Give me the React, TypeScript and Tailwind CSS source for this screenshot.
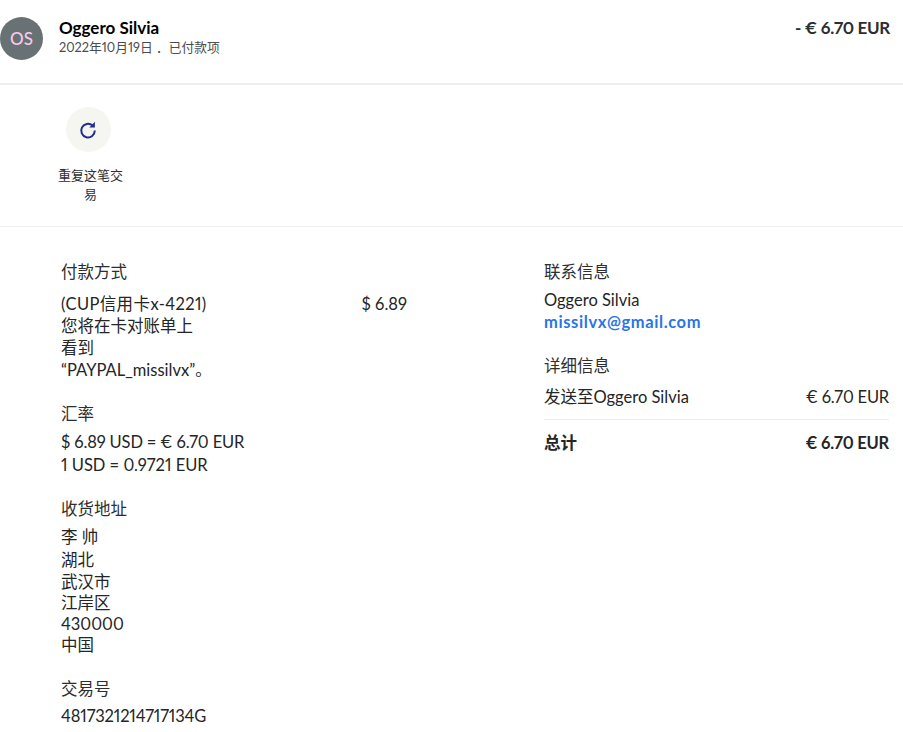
const font = 'Lato, "Noto Sans CJK SC", sans-serif';

function Label({ children }: { children: React.ReactNode }) {
  return <h3 className="text-[16.5px] leading-[22px] text-[#2c2e2f]">{children}</h3>;
}

export default function App() {
  return (
    <div className="w-[903px] h-[732px] overflow-hidden bg-white text-[#232526] [font-variant-numeric:proportional-nums]" style={{ fontFamily: font }}>
      {/* Header */}
      <header className="h-[85px] border-b-2 border-[#eeeeee] flex items-start pt-[17px] pr-[13px]">
        <div className="w-[43px] h-[43px] rounded-full bg-[#687173] flex items-center justify-center text-[17px] font-medium text-[#f8c8ea]">
          OS
        </div>
        <div className="ml-4">
          <div className="text-[17px] leading-[22px] font-bold text-black">Oggero Silvia</div>
          <div className="text-[12.75px] leading-[17px] text-[#4a4d4f]">2022年10月19日 ．已付款项</div>
        </div>
        <div className="ml-auto text-[17px] leading-[22px] font-bold tracking-[-0.3px] text-[#2c2e2f]">- € 6.70 EUR</div>
      </header>

      {/* Actions */}
      <section className="h-[142px] border-b border-[#eeeeee] pt-[22px]">
        <div className="w-[65px] ml-[58px] flex flex-col items-center">
          <div className="w-[45px] h-[45px] rounded-full bg-[#f6f6f1] -ml-[5px] flex items-center justify-center">
            <svg width="20" height="20" viewBox="0 0 20 20" fill="none">
              <path d="M14.6 5.6a6.8 6.8 0 1 0 2.2 5" stroke="#1f2f8f" strokeWidth="2" />
              <path d="M16.9 1.8v5.6h-5.6z" fill="#1f2f8f" />
            </svg>
          </div>
          <div className="mt-[14px] text-[13px] leading-[19px] text-center text-[#2c2e2f]">重复这笔交易</div>
        </div>
      </section>

      {/* Details */}
      <section className="flex pt-[34px] pl-[61px] pr-[14px]">
        <div className="w-[346px]">
          <Label>付款方式</Label>
          <div className="mt-[10px] flex justify-between text-[16.5px] leading-[22px]">
            <div className="w-[146px]">
              <div className="whitespace-nowrap tracking-[0.4px]">(CUP信用卡x-4221)</div>
              <div>您将在卡对账单上看到</div>
              <div className="whitespace-nowrap">“PAYPAL_missilvx”。</div>
            </div>
            <div>$ 6.89</div>
          </div>

          <div className="mt-[22px]">
            <Label>汇率</Label>
            <div className="mt-[6px] text-[16.5px] leading-[22.5px]">
              <div className="tracking-[-0.15px]">$ 6.89 USD = € 6.70 EUR</div>
              <div>1 USD = 0.9721 EUR</div>
            </div>
          </div>

          <div className="mt-[22px]">
            <Label>收货地址</Label>
            <div className="mt-[7px] text-[16.5px] leading-[21.3px]">
              <div className="mb-[2px]">李 帅</div>
              <div>湖北</div>
              <div>武汉市</div>
              <div>江岸区</div>
              <div>430000</div>
              <div>中国</div>
            </div>
          </div>

          <div className="mt-[21px]">
            <Label>交易号</Label>
            <div className="mt-[5px] text-[16.5px] leading-[22px] tracking-[-0.15px]">4817321214717134G</div>
          </div>
        </div>

        <div className="ml-[137px] flex-1">
          <Label>联系信息</Label>
          <div className="mt-[6px] text-[16.5px] leading-[22px]">
            <div>Oggero Silvia</div>
            <div className="font-bold tracking-[0.6px] text-[#2a75e6]">missilvx@gmail.com</div>
          </div>

          <div className="mt-[22px]">
            <Label>详细信息</Label>
            <div className="mt-[9px] pb-[11px] border-b border-[#eeeeee] flex justify-between text-[16.5px] leading-[22px]">
              <span>发送至Oggero Silvia</span>
              <span className="tracking-[-0.2px]">€ 6.70 EUR</span>
            </div>
            <div className="mt-[12px] flex justify-between text-[16.5px] leading-[22px] font-bold">
              <span>总计</span>
              <span className="tracking-[-0.2px]">€ 6.70 EUR</span>
            </div>
          </div>
        </div>
      </section>
    </div>
  );
}
